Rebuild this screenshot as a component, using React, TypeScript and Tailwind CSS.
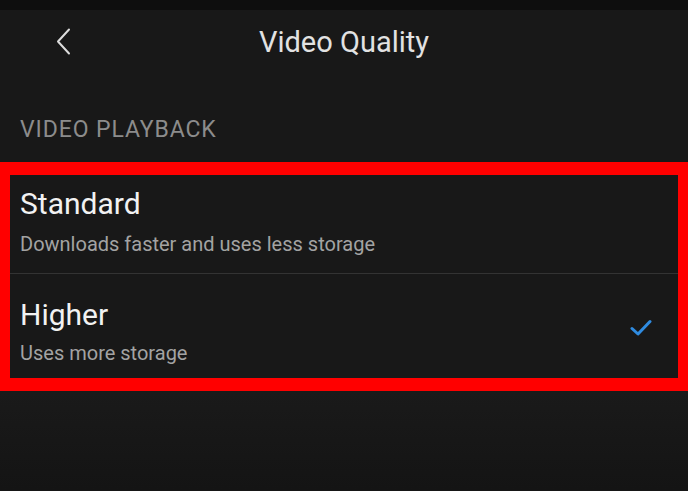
import React from 'react';

function App() {
  const options = [
    { title: 'Standard', desc: 'Downloads faster and uses less storage', selected: false },
    { title: 'Higher', desc: 'Uses more storage', selected: true },
  ];

  return (
    <div
      className="w-[688px] h-[491px] bg-[#161616] text-white overflow-hidden"
      style={{ fontFamily: 'Roboto, "Liberation Sans", sans-serif' }}
    >
      <div className="h-[10px] bg-[#0e0e0e]" />

      {/* Header */}
      <div className="relative h-[64px] flex items-center justify-center bg-[#181818]">
        <svg
          className="absolute left-[55px] top-[18px]"
          width="17"
          height="27"
          viewBox="0 0 17 27"
          fill="none"
        >
          <path d="M14 1.5 L3 13.5 L14 25.5" stroke="#dcdcdc" strokeWidth="2" strokeLinecap="round" strokeLinejoin="round" />
        </svg>
        <h1 className="text-[29px] leading-[34px] text-[#e2e2e2]">Video Quality</h1>
      </div>

      {/* Section label */}
      <div className="h-[88px] bg-[#181818] px-[20px] pt-[44px]">
        <p className="text-[23px] leading-[24px] tracking-[0.9px] text-[#8c8c8c]">VIDEO PLAYBACK</p>
      </div>

      {/* Highlighted options */}
      <div className="border-x-[10px] border-y-[13px] border-[#ff0000] bg-[#181818]">
        {options.map((opt, i) => (
          <div
            key={opt.title}
            className={`flex items-start justify-between pl-[10px] pr-[26px] ${
              i === 0 ? 'h-[99px] border-b border-[#333333] pt-[13px]' : 'h-[104px] pt-[25px]'
            }`}
          >
            <div>
              <p className="text-[30px] leading-[32px] text-[#f2f2f2]">{opt.title}</p>
              <p className={`${i === 0 ? 'mt-[12px]' : 'mt-[10px]'} text-[20px] leading-[24px] text-[#a3a3a3]`}>
                {opt.desc}
              </p>
            </div>
            {opt.selected && (
              <svg className="mt-[20px]" width="22" height="18" viewBox="0 0 22 18" fill="none">
                <path d="M2 9.5 L8 15 L20 2.5" stroke="#2f8be0" strokeWidth="3" strokeLinecap="round" strokeLinejoin="round" />
              </svg>
            )}
          </div>
        ))}
      </div>

      <div className="h-[99px] bg-gradient-to-b from-[#1a1a1a] to-[#141414]" />
    </div>
  );
}

export default App;
